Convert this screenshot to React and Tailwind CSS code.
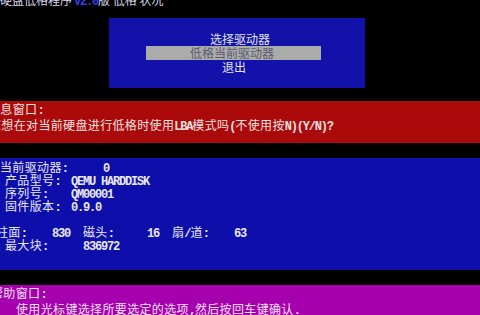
import React from "react";

const ASCII = /^[\x20-\x7e]+$/;

function T({ s }) {
  const parts = s.split(/([\x20-\x7e]+)/).filter((p) => p !== "");
  return (
    <>
      {parts.map((p, i) =>
        ASCII.test(p) ? (
          <span
            key={i}
            className="font-['Liberation_Mono',monospace] text-[12px] font-bold tracking-[-1.2px] whitespace-pre"
          >
            {p}
          </span>
        ) : (
          <span key={i} className="tracking-[0.35px]">
            {p}
          </span>
        )
      )}
    </>
  );
}

export default function App() {
  return (
    <div className="w-[480px] h-[315px] overflow-hidden bg-black text-[#e4e4e4] font-['Noto_Sans_CJK_SC',sans-serif] text-[12px] leading-[13px] whitespace-nowrap">
      {/* title, cut at top */}
      <div className="h-[18px] overflow-hidden">
        <div className="-mt-[7px] flex items-baseline text-[#d8d8e8]">
          <span>硬盘低格程序</span>
          <span className="text-[#3a3ae8] ml-[2px]">
            <T s="V2.0" />
          </span>
          <span>版 低格 状况</span>
        </div>
      </div>

      {/* menu box */}
      <div className="ml-[109px] w-[256px] h-[70px] bg-[#1212aa] pt-[14px] leading-[14px]">
        <div className="pl-[101px]">选择驱动器</div>
        <div className="ml-[37px] w-[175px] h-[14px] bg-[#ababab] pl-[44px] text-[#5c5c70]">
          低格当前驱动器
        </div>
        <div className="pl-[113px]">退出</div>
      </div>

      {/* message window */}
      <div className="mt-[13px] h-[42px] bg-[#aa0a0a] pt-[1px] text-[#f0e0e0]">
        <div className="-ml-[12px]">
          <T s="信息窗口:" />
        </div>
        <div className="-ml-[11px]">
          <T s="您想在对当前硬盘进行低格时使用LBA模式吗(不使用按N)(Y/N)?" />
        </div>
      </div>

      {/* drive info */}
      <div className="mt-[15px] h-[112px] bg-[#0e0eaa] pt-[2px] text-[#e8e8f2]">
        <div className="flex items-baseline h-[13px]">
          <span className="w-[103px]">
            <T s="当前驱动器:" />
          </span>
          <T s="0" />
        </div>
        <div className="flex items-baseline h-[13px] ml-[5px]">
          <span className="w-[66px]">
            <T s="产品型号:" />
          </span>
          <T s="QEMU HARDDISK" />
        </div>
        <div className="flex items-baseline h-[13px] ml-[5px]">
          <span className="w-[66px]">
            <T s="序列号:" />
          </span>
          <T s="QM00001" />
        </div>
        <div className="flex items-baseline h-[13px] ml-[5px]">
          <span className="w-[66px]">
            <T s="固件版本:" />
          </span>
          <T s="0.9.0" />
        </div>
        <div className="h-[13px]" />
        <div className="flex items-baseline h-[13px] -ml-[4px]">
          <span className="w-[56px]">
            <T s="柱面:" />
          </span>
          <span className="w-[31px]">
            <T s="830" />
          </span>
          <span className="w-[64px]">
            <T s="磁头:" />
          </span>
          <span className="w-[25px]">
            <T s="16" />
          </span>
          <span className="w-[62px]">
            <T s="扇/道:" />
          </span>
          <T s="63" />
        </div>
        <div className="flex items-baseline h-[13px] ml-[5px]">
          <span className="w-[78px]">
            <T s="最大块:" />
          </span>
          <T s="836972" />
        </div>
      </div>

      {/* help window */}
      <div className="mt-[15px] h-[40px] bg-[#a600ae] pt-[1px] text-[#f0e0f0]">
        <div className="-ml-[9px]">
          <T s="帮助窗口:" />
        </div>
        <div className="ml-[16px]">
          <T s="使用光标键选择所要选定的选项,然后按回车键确认." />
        </div>
      </div>
    </div>
  );
}
